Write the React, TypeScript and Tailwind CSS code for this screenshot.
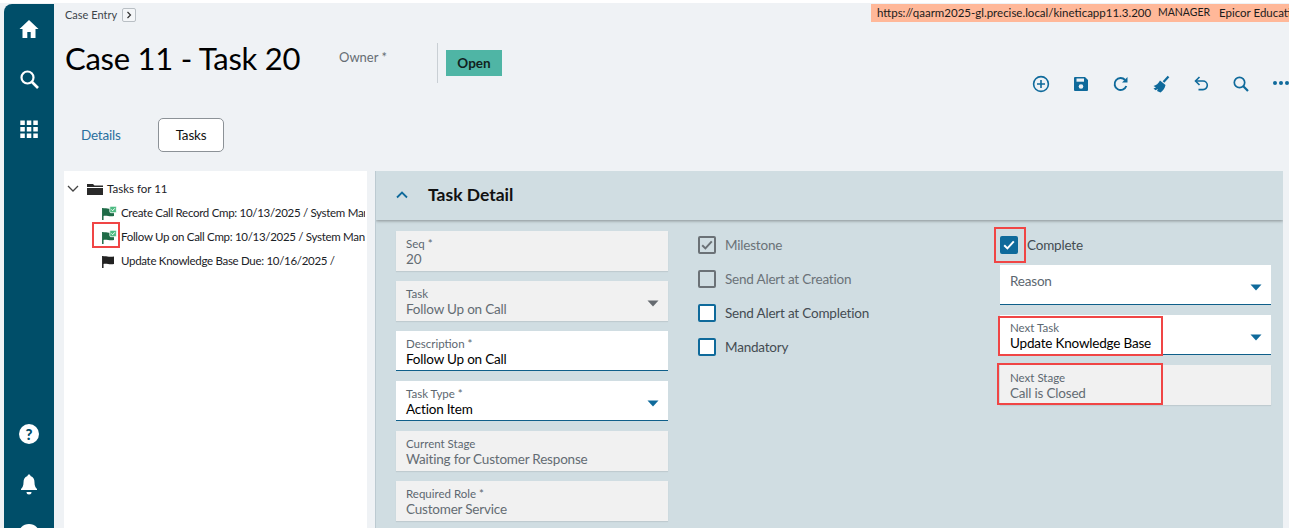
import React from "react";

const font = { fontFamily: '"Lato", "Noto Sans", sans-serif' };

function Caret({ color = "#0f6a9b" }: { color?: string }) {
  return (
    <svg width="12" height="7" viewBox="0 0 12 7" className="shrink-0">
      <path d="M0.5 0.5h11L6 6.5z" fill={color} />
    </svg>
  );
}

function Field({
  label,
  value,
  disabled,
  caret,
  dim,
}: {
  label: string;
  value?: string;
  disabled?: boolean;
  caret?: boolean;
  dim?: boolean;
}) {
  return (
    <div
      className={
        disabled
          ? "relative h-10 w-full bg-[#f1f1f1] px-2.5 pt-[5px] shadow-[0_1px_1px_rgba(0,0,0,0.08)]"
          : "relative h-10 w-full border-b border-b-[#0f5f8a] bg-white px-2.5 pt-[5px]"
      }
    >
      {value ? (
        <>
          <div className="text-[11.5px] leading-[15px] text-[#5c6770]">{label}</div>
          <div
            className={
              disabled
                ? "text-[13.5px] leading-[16px] tracking-[-0.2px] text-[#646c73]"
                : "text-[13.5px] leading-[16px] tracking-[-0.2px] text-black"
            }
          >
            {value}
          </div>
        </>
      ) : (
        <div className="mt-[2px] text-[13.5px] leading-[18px] tracking-[-0.2px] text-[#5c6770]">{label}</div>
      )}
      {caret && (
        <div className="absolute right-[9px] top-[19px] flex">
          <Caret color={dim ? "#666b70" : "#0f6a9b"} />
        </div>
      )}
    </div>
  );
}

function Check({ label, kind }: { label: string; kind: "gray-check" | "gray" | "blue" | "checked" }) {
  const box =
    kind === "checked"
      ? "bg-[#0f6a9b] border-[#0f6a9b]"
      : kind === "blue"
        ? "border-[#0f6a9b] bg-white"
        : "border-[#6b7176] bg-transparent";
  return (
    <div className="flex h-[18px] items-center gap-[9px]">
      <div className={`flex h-[18px] w-[18px] items-center justify-center rounded-[2px] border-2 ${box}`}>
        {(kind === "checked" || kind === "gray-check") && (
          <svg width="12" height="10" viewBox="0 0 12 10">
            <path
              d="M1.2 5.2l3.2 3.2L10.8 1.4"
              fill="none"
              stroke={kind === "checked" ? "#fff" : "#6b7176"}
              strokeWidth="2"
            />
          </svg>
        )}
      </div>
      <span
        className={
          kind === "blue" || kind === "checked"
            ? "text-[13.5px] tracking-[-0.2px] text-[#444c52]"
            : "text-[13.5px] tracking-[-0.2px] text-[#6b7278]"
        }
      >
        {label}
      </span>
    </div>
  );
}

function Flag({ done }: { done?: boolean }) {
  const c = done ? "#1f6b47" : "#222";
  return (
    <svg width="16" height="14" viewBox="0 0 16 14" className="shrink-0">
      <path d="M1.8 2v12" stroke={c} strokeWidth="1.5" />
      <path d="M2 2.5c3-1 5 1 11 0v7.500c-5 1-7-1-11 0z" fill={c} />
      {done && (
        <>
          <rect x="8.8" y="0.3" width="6.6" height="6.4" rx="1" fill="#4dbb82" stroke="#fff" strokeWidth="0.8" />
          <path d="M10.4 3.500l1.300 1.200 2.100-2.400" stroke="#fff" strokeWidth="1" fill="none" />
        </>
      )}
    </svg>
  );
}

function TreeRow({ text, done }: { text: string; done?: boolean }) {
  return (
    <div className="flex h-6 items-center gap-1 pl-[37px] pr-[2px]">
      <Flag done={done} />
      <span className="overflow-hidden whitespace-nowrap text-[11.5px] tracking-[-0.3px] text-[#1b2227]">{text}</span>
    </div>
  );
}

const ic = "#0f6a9b";

function ToolIcons() {
  return (
    <div className="flex items-center gap-5 pt-[46px]">
      <svg width="20" height="20" viewBox="0 0 20 20">
        <circle cx="10" cy="10" r="7.4" fill="none" stroke={ic} strokeWidth="1.6" />
        <path d="M10 6v8M6 10h8" stroke={ic} strokeWidth="1.6" />
      </svg>
      <svg width="20" height="20" viewBox="0 0 20 20">
        <path d="M3 4a1 1 0 0 1 1-1h10l3 3v10a1 1 0 0 1-1 1H4a1 1 0 0 1-1-1z" fill={ic} />
        <rect x="5.500" y="4.500" width="7.500" height="3.200" fill="#eff2f5" />
        <circle cx="10" cy="12.500" r="2.300" fill="#eff2f5" />
      </svg>
      <svg width="20" height="20" viewBox="0 0 20 20">
        <path d="M15.300 12a6 6 0 1 1-1.200-6" fill="none" stroke={ic} strokeWidth="1.900" />
        <path d="M16.500 3v5.500H11z" fill={ic} />
      </svg>
      <svg width="20" height="20" viewBox="0 0 20 20">
        <path d="M12.500 8L17.500 2.500" stroke={ic} strokeWidth="2.200" />
        <path d="M9 6.500l5.500 4.500c-.5 3-2.500 6-5 7.500L6 17l1-2-2.500 1.200L2.500 14.500 5 13.500 2.500 12C5 11.500 7.500 9.500 9 6.500z" fill={ic} />
      </svg>
      <svg width="20" height="20" viewBox="0 0 20 20">
        <path d="M5 7h7a4.300 4.300 0 0 1 0 8.600H7.500" fill="none" stroke={ic} strokeWidth="1.600" />
        <path d="M8.500 3L4.500 7l4 4" fill="none" stroke={ic} strokeWidth="1.600" />
      </svg>
      <svg width="20" height="20" viewBox="0 0 20 20">
        <circle cx="8.500" cy="8.500" r="5.200" fill="none" stroke={ic} strokeWidth="1.700" />
        <path d="M12.300 12.300L17 17" stroke={ic} strokeWidth="2.200" />
      </svg>
      <svg width="18" height="20" viewBox="0 0 18 20" className="-mt-[3px]">
        <circle cx="4" cy="10" r="2" fill={ic} />
        <circle cx="10" cy="10" r="2" fill={ic} />
        <circle cx="16" cy="10" r="2" fill={ic} />
      </svg>
    </div>
  );
}

function Overlay({ className }: { className: string }) {
  return <div className={`pointer-events-none absolute border-2 border-[#f04545] ${className}`} />;
}

export default function App() {
  return (
    <div className="relative flex h-[528px] w-[1289px] overflow-hidden bg-[#eff2f5] pl-1 pt-1" style={font}>
      <div className="absolute left-0 right-0 top-0 h-[3px] bg-white" />

      {/* sidebar */}
      <aside className="flex h-[600px] w-[50px] shrink-0 flex-col items-center rounded-tl-[8px] bg-[#004e69] pt-[14px]">
        <svg width="22" height="22" viewBox="0 0 22 22">
          <path d="M11 2L1.500 11H4.500v9h4.800v-6h3.400v6h4.800v-9h3z" fill="#fff" />
        </svg>
        <svg width="22" height="22" viewBox="0 0 22 22" className="mt-[28px]">
          <circle cx="9.500" cy="9.500" r="6" fill="none" stroke="#fff" strokeWidth="2.200" />
          <path d="M14 14l6 6" stroke="#fff" strokeWidth="2.600" />
        </svg>
        <svg width="18" height="18" viewBox="0 0 18 18" className="mt-[30px]">
          {[0, 6.5, 13].map((x) =>
            [0.5, 7, 13.5].map((y) => (
              <rect key={`${x}-${y}`} x={x + 0.3} y={y} width="4.5" height="4.5" fill="#fff" />
            )),
          )}
        </svg>
        <svg width="22" height="22" viewBox="0 0 22 22" className="mt-[285px]">
          <circle cx="11" cy="11" r="10" fill="#fff" />
          <text x="11" y="16.5" textAnchor="middle" fontSize="15" fontWeight="900" fill="#004e69" fontFamily="Lato">
            ?
          </text>
        </svg>
        <svg width="20" height="22" viewBox="0 0 20 22" className="mt-[28px]">
          <path d="M10 1.500c1 0 1.500.7 1.500 1.500 3 .8 4 3.500 4 6.500 0 3 .8 5 2.500 6.500v1H2v-1c1.700-1.500 2.500-3.500 2.500-6.500 0-3 1-5.700 4-6.500 0-.8.500-1.500 1.500-1.500z" fill="#fff" />
          <path d="M7.500 19h5a2.500 2.500 0 0 1-5 0z" fill="#fff" />
        </svg>
        <div className="mt-[29px] h-[22px] w-[22px] shrink-0 rounded-full bg-white" />
      </aside>

      {/* main */}
      <main className="flex min-w-0 flex-1 flex-col">
        <header className="flex h-[114px] shrink-0 justify-between pl-[11px]">
          <div className="flex flex-col">
            <div className="flex h-[22px] items-center gap-[5px] text-[11px] text-[#3d454b]">
              <span>Case Entry</span>
              <span className="flex h-[14px] w-[14px] items-center justify-center rounded-[2px] border border-[#b9bfc4] bg-[#f4f6f8]">
                <svg width="6" height="8" viewBox="0 0 6 8">
                  <path d="M1.500 1l3 3-3 3" fill="none" stroke="#333" strokeWidth="1.200" />
                </svg>
              </span>
            </div>
            <div className="mt-[10px] flex items-start">
              <h1 className="mt-[2px] w-[235px] whitespace-nowrap text-[31px] font-normal leading-[40px] tracking-[-0.25px] text-black">
                Case 11 - Task 20
              </h1>
              <span className="ml-[39px] mt-[11px] w-[47px] whitespace-nowrap text-[13px] leading-[20px] text-[#666d73]">
                Owner *
              </span>
              <div className="ml-[51px] mt-[7px] h-10 w-px bg-[#c9cfd4]" />
              <div className="ml-2 mt-[14px] flex h-[26px] w-14 items-center justify-center bg-[#4fb5a5] text-[13.5px] font-bold text-[#11221f]">
                Open
              </div>
            </div>
          </div>
          <ToolIcons />
        </header>

        <nav className="flex h-[53px] shrink-0 items-start pl-[27px]">
          <span className="mt-[8px] w-10 whitespace-nowrap text-[13.5px] leading-[18px] tracking-[-0.2px] text-[#2a6f9e]">
            Details
          </span>
          <button className="ml-[37px] h-[34px] w-[66px] rounded-[5px] border border-[#8c9297] bg-white text-[13.5px] tracking-[-0.2px] text-[#111]">
            Tasks
          </button>
        </nav>

        <div className="flex min-h-0 flex-1 gap-2 pl-[10px] pr-[6px]">
          {/* tree */}
          <section className="w-[303px] shrink-0 overflow-hidden bg-white pt-[6px]">
            <div className="flex h-6 items-center pl-[3px]">
              <svg width="12" height="8" viewBox="0 0 12 8">
                <path d="M1 1l5 5 5-5" fill="none" stroke="#444" strokeWidth="1.300" />
              </svg>
              <svg width="16" height="12" viewBox="0 0 16 12" className="ml-[8px]">
                <path d="M0 1h6l1.500 1.500H16V4H0zM0 5h16v7H0z" fill="#2a2a2a" />
              </svg>
              <span className="ml-[4px] text-[11.5px] text-[#1b2227]">Tasks for 11</span>
            </div>
            <TreeRow done text="Create Call Record Cmp: 10/13/2025 / System Manager" />
            <TreeRow done text="Follow Up on Call Cmp: 10/13/2025 / System Manager" />
            <TreeRow text="Update Knowledge Base Due: 10/16/2025 /" />
          </section>

          {/* detail */}
          <section className="min-w-0 flex-1 overflow-hidden border-l border-l-[#bccad1] bg-[#d0dde2]">
            <div className="flex h-[49px] items-center gap-5 pb-[2px] pl-5 shadow-[0_1px_3px_rgba(0,0,0,0.35)]">
              <svg width="12" height="8" viewBox="0 0 12 8">
                <path d="M1 6.500l5-5 5 5" fill="none" stroke="#0f6a9b" strokeWidth="1.800" />
              </svg>
              <span className="text-[17.5px] font-bold leading-none text-[#111]">Task Detail</span>
            </div>
            <div className="flex pl-5 pt-[11px]">
              <div className="flex w-[272px] shrink-0 flex-col gap-2.5">
                <Field disabled label="Seq *" value="20" />
                <Field disabled caret dim label="Task" value="Follow Up on Call" />
                <Field label="Description *" value="Follow Up on Call" />
                <Field caret label="Task Type *" value="Action Item" />
                <Field disabled label="Current Stage" value="Waiting for Customer Response" />
                <Field disabled label="Required Role *" value="Customer Service" />
              </div>
              <div className="ml-[30px] flex w-[302px] shrink-0 flex-col gap-4 pt-[5px]">
                <Check kind="gray-check" label="Milestone" />
                <Check kind="gray" label="Send Alert at Creation" />
                <Check kind="blue" label="Send Alert at Completion" />
                <Check kind="blue" label="Mandatory" />
              </div>
              <div className="flex w-[271px] shrink-0 flex-col">
                <div className="pt-[5px]">
                  <Check kind="checked" label="Complete" />
                </div>
                <div className="mt-[11px] flex flex-col gap-2.5">
                  <Field caret label="Reason" />
                  <Field caret label="Next Task" value="Update Knowledge Base" />
                  <Field disabled label="Next Stage" value="Call is Closed" />
                </div>
              </div>
            </div>
          </section>
        </div>
      </main>

      {/* environment banner */}
      <div className="absolute right-0 top-1 flex h-[18px] w-[418px] items-center overflow-hidden whitespace-nowrap bg-[#ffb899] pl-[6px] text-[11.5px] text-[#1b1b1b]">
        <span className="w-[271px]">https://qaarm2025-gl.precise.local/kineticapp11.3.200</span>
        <span className="ml-[10px] w-[51px] text-[10.5px]">MANAGER</span>
        <span className="ml-[10px]">Epicor Education</span>
      </div>

      {/* annotation boxes */}
      <Overlay className="left-[92px] top-[222px] h-[26px] w-[28px]" />
      <Overlay className="left-[994px] top-[227px] h-9 w-8" />
      <Overlay className="left-[998px] top-[316px] h-10 w-[165px]" />
      <Overlay className="left-[997px] top-[363px] h-[42px] w-[166px]" />
    </div>
  );
}
